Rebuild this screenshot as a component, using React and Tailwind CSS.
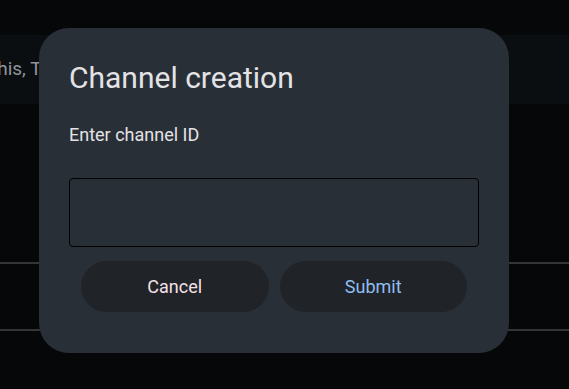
import React from 'react';

export default function App() {
  return (
    <div
      className="relative w-[569px] h-[389px] overflow-hidden bg-[#060708]"
      style={{ fontFamily: 'Roboto, "Liberation Sans", sans-serif' }}
    >
      {/* page behind the dialog */}
      <div className="flex flex-col pt-[35px]">
        <div className="h-[69px] bg-[#0b0e11] flex items-center overflow-hidden">
          <span className="ml-[-9px] whitespace-nowrap text-[19px] text-[#8f949a]">this, Th</span>
        </div>
        <div className="h-[158px]" />
        <div className="h-[2px] bg-[#333537]" />
        <div className="h-[65px]" />
        <div className="h-[2px] bg-[#333537]" />
      </div>

      {/* dialog */}
      <div className="absolute left-[39px] top-[28px] w-[470px] h-[325px] rounded-[30px] bg-[#292f37] px-[30px] pt-[30px] flex flex-col">
        <h2 className="text-[30px] leading-[40px] text-[#e3e3e6]">Channel creation</h2>
        <p className="mt-[25px] text-[18px] leading-[24px] text-[#e3e3e6]">Enter channel ID</p>
        <input
          className="mt-[31px] h-[69px] w-full rounded-[4px] border border-black bg-[#292f37] outline-none px-3 text-[#e3e3e6]"
        />
        <div className="mt-[14px] mx-[12px] flex gap-[11px]">
          <button className="flex-1 h-[51px] rounded-full bg-[#202328] text-[18px] text-[#f5e1e5]">
            Cancel
          </button>
          <button className="flex-1 h-[51px] rounded-full bg-[#202328] text-[18px] text-[#90bdf2]">
            Submit
          </button>
        </div>
      </div>
    </div>
  );
}
